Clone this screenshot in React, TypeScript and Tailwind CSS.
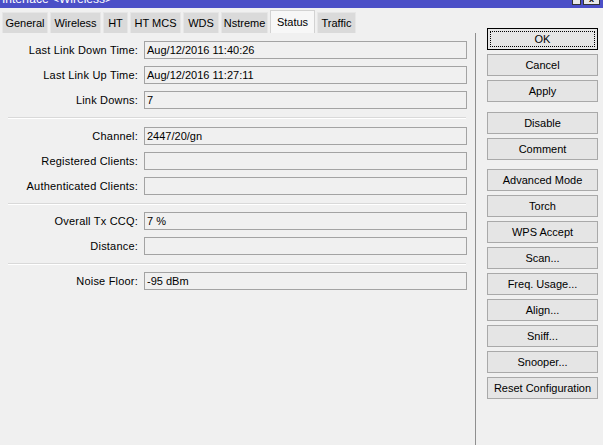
import React from "react";

const tabs: { name: string; w: number; active?: boolean }[] = [
  { name: "General", w: 46 },
  { name: "Wireless", w: 51 },
  { name: "HT", w: 25 },
  { name: "HT MCS", w: 51 },
  { name: "WDS", w: 36 },
  { name: "Nstreme", w: 47 },
  { name: "Status", w: 45, active: true },
  { name: "Traffic", w: 39 },
];

type Row = { label: string; value: string };
const sections: Row[][] = [
  [
    { label: "Last Link Down Time:", value: "Aug/12/2016 11:40:26" },
    { label: "Last Link Up Time:", value: "Aug/12/2016 11:27:11" },
    { label: "Link Downs:", value: "7" },
  ],
  [
    { label: "Channel:", value: "2447/20/gn" },
    { label: "Registered Clients:", value: "" },
    { label: "Authenticated Clients:", value: "" },
  ],
  [
    { label: "Overall Tx CCQ:", value: "7 %" },
    { label: "Distance:", value: "" },
  ],
  [{ label: "Noise Floor:", value: "-95 dBm" }],
];

const buttonGroups: string[][] = [
  ["OK", "Cancel", "Apply"],
  ["Disable", "Comment"],
  [
    "Advanced Mode",
    "Torch",
    "WPS Accept",
    "Scan...",
    "Freq. Usage...",
    "Align...",
    "Sniff...",
    "Snooper...",
    "Reset Configuration",
  ],
];

function Field({ label, value }: Row) {
  return (
    <div className="flex items-center h-[18px]">
      <div className="w-[144px] text-right pr-[6px] whitespace-nowrap tracking-[0.2px]">{label}</div>
      <div className="w-[323px] h-[18px] border border-[#a3a3a3] bg-[#f0f0f0] pl-[2px] flex items-center whitespace-nowrap">
        {value}
      </div>
    </div>
  );
}

export default function App() {
  return (
    <div
      className="w-[603px] h-[445px] bg-[#f0f0f0] text-[11px] text-black overflow-hidden flex flex-col"
      style={{ fontFamily: '"Liberation Sans", Arial, sans-serif' }}
    >
      {/* title bar */}
      <div className="h-[8px] bg-[#4b4fc7] relative overflow-hidden shrink-0">
        <div className="absolute left-[2px] top-[-8px] text-white text-[12px] leading-[14px] whitespace-nowrap">
          Interface &lt;Wireless&gt;
        </div>
        <div className="absolute right-[22px] top-[-6px] w-[9px] h-[11px] border border-[#333] bg-[#e8e8e8]" />
        <div className="absolute right-[3px] top-[-6px] w-[17px] h-[11px] border border-[#333] bg-[#e8e8e8] flex items-end justify-center">
          <span className="text-[9px] leading-[9px] font-bold text-black">x</span>
        </div>
      </div>

      <div className="flex flex-1">
        {/* left column */}
        <div className="w-[476px] flex flex-col">
          <div className="flex items-end gap-[2px] pl-[2px] h-[25px] pt-[2px]">
            {tabs.map((t) => (
              <div
                key={t.name}
                style={{ width: t.w }}
                className={
                  t.active
                    ? "h-[23px] bg-[#f7f7f7] border border-b-0 border-[#d2d2d2] flex items-center justify-center whitespace-nowrap text-[11px]"
                    : "h-[21px] bg-[#dadada] border border-b-0 border-[#e6e6e6] flex items-center justify-center whitespace-nowrap text-[11px]"
                }
              >
                {t.name}
              </div>
            ))}
          </div>
          <div className="flex-1 border-r border-[#8f8f8f] pt-[8px] flex flex-col">
            {sections.map((sec, si) => (
              <div key={si} className="flex flex-col">
                {si > 0 && (
                  <div
                    className={
                      si === 1
                        ? "ml-[8px] w-[458px] mt-[8px] mb-[8px] border-t border-[#d9d9d9] border-b border-b-white"
                        : "ml-[8px] w-[458px] mt-[8px] mb-[7px] border-t border-[#d9d9d9] border-b border-b-white"
                    }
                  />
                )}
                <div className="flex flex-col gap-[7px]">
                  {sec.map((r) => (
                    <Field key={r.label} {...r} />
                  ))}
                </div>
              </div>
            ))}
          </div>
        </div>

        {/* right column */}
        <div className="flex flex-col pl-[11px] pt-[20px]">
          {buttonGroups.map((g, gi) => (
            <div
              key={gi}
              className={
                gi === 0
                  ? "flex flex-col gap-[4px]"
                  : gi === 1
                  ? "flex flex-col gap-[4px] mt-[10px]"
                  : "flex flex-col gap-[4px] mt-[9px]"
              }
            >
              {g.map((b) =>
                b === "OK" ? (
                  <div
                    key={b}
                    className="w-[111px] h-[22px] border border-black bg-[#e5e5e5] p-[2px]"
                  >
                    <div className="w-full h-full border border-dotted border-black flex items-center justify-center">
                      {b}
                    </div>
                  </div>
                ) : (
                  <div
                    key={b}
                    className="w-[111px] h-[22px] border border-[#a9a9a9] bg-[#e5e5e5] flex items-center justify-center whitespace-nowrap"
                  >
                    {b}
                  </div>
                )
              )}
            </div>
          ))}
        </div>
      </div>
    </div>
  );
}
